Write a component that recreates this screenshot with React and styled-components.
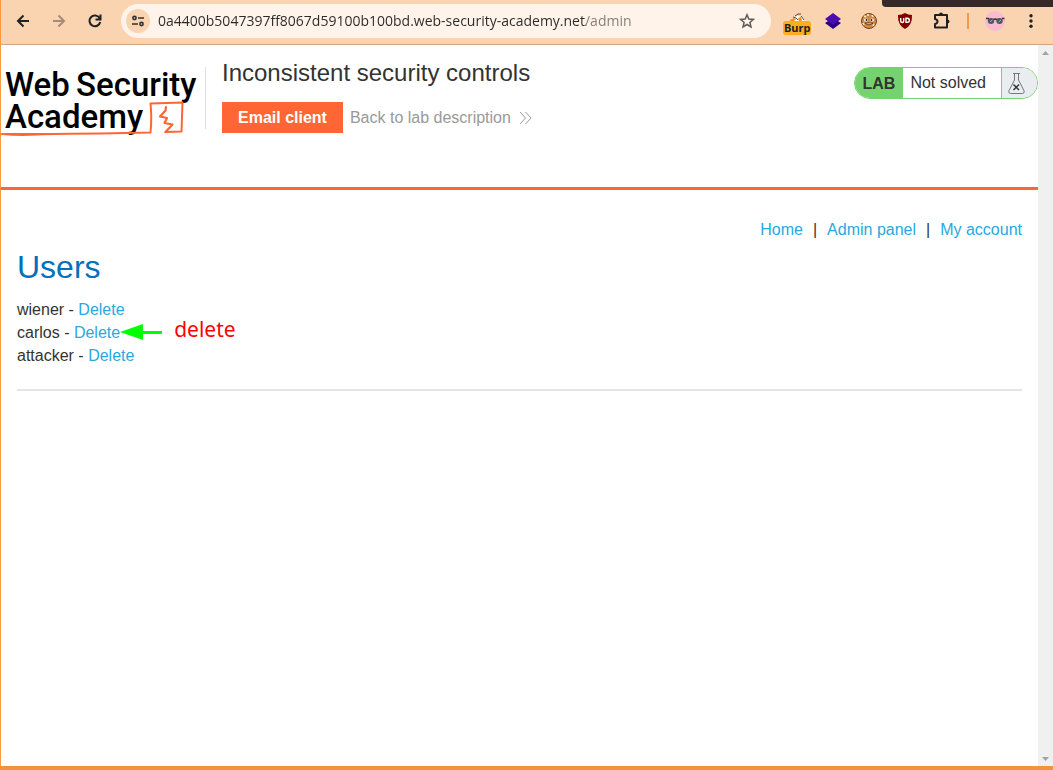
import React from "react";
import styled, { createGlobalStyle } from "styled-components";

const GlobalStyle = createGlobalStyle`
  *, *::before, *::after { box-sizing: border-box; }
  body { margin: 0; font-family: "Liberation Sans", Arial, sans-serif; font-size: 16px; color: #333332; background: #fff; }
  button { font: inherit; border: 0; padding: 0; background: none; color: inherit; cursor: pointer; }
  a { text-decoration: none; }
`;

const Window = styled.div`
  position: relative;
  display: flex;
  flex-direction: column;
  min-height: 100vh;
  border-left: 1px solid #f79a42;
  border-bottom: 4px solid #f39239;
`;

const TabStub = styled.div`
  position: absolute;
  top: 0;
  right: 0;
  width: 171px;
  height: 7px;
  background: #352a25;
  border-bottom-left-radius: 4px;
`;

const Toolbar = styled.header`
  display: flex;
  align-items: center;
  padding: 4px 4px 6px;
  background: #fad3b1;
  border-bottom: 1px solid #cfa684;
`;

const IconButton = styled.button`
  display: flex;
  align-items: center;
  justify-content: center;
  flex: none;
  width: 36px;
  height: 34px;
  color: ${(p) => (p.$muted ? "#a58c77" : "#202124")};
`;

const AddressBar = styled.div`
  display: flex;
  align-items: center;
  flex: 1;
  min-width: 0;
  height: 34px;
  margin: 0 8px;
  padding: 0 12px 0 5px;
  border-radius: 17px;
  background: #fff3ea;
`;

const RoundButton = styled.button`
  display: flex;
  align-items: center;
  justify-content: center;
  flex: none;
  width: 24px;
  height: 24px;
  border-radius: 12px;
  background: ${(p) => (p.$filled ? "#fad3b1" : "transparent")};
  color: #303134;
`;

const AddressInput = styled.input`
  flex: 1;
  min-width: 0;
  height: 24px;
  margin: 0 8px;
  padding: 0;
  border: 0;
  outline: 0;
  font: 14px/24px "Open Sans", "Noto Sans", sans-serif;
  color: #2b2a29;
  background: linear-gradient(to right, #2b2a29 428px, #827a74 428px);
  background-clip: text;
  -webkit-text-fill-color: transparent;
`;

const BurpIcon = styled.span`
  display: flex;
  flex-direction: column;
  align-items: center;
  padding-top: 5px;
`;

const BurpBadge = styled.span`
  width: 28px;
  height: 14px;
  padding-left: 1px;
  overflow: hidden;
  border-radius: 3px;
  background: #fcae1e;
  font: bold 11px/14px "Noto Sans", sans-serif;
  color: #202124;
  text-align: left;
  white-space: nowrap;
`;

const Separator = styled.span`
  flex: none;
  width: 2px;
  height: 16px;
  margin: 0 8px;
  background: #f39b4b;
`;

const Viewport = styled.div`
  display: flex;
  flex: 1;
`;

const Page = styled.div`
  flex: 1;
  min-width: 0;
`;

const ScrollTrack = styled.div`
  display: flex;
  flex-direction: column;
  align-items: center;
  justify-content: space-between;
  width: 15px;
  padding: 6px 0 5px;
  background: #f0f0f0;
`;

const LabHeader = styled.section`
  display: flex;
  align-items: flex-start;
  height: 145px;
  padding-top: 13px;
  border-bottom: 3px solid #ff6633;
`;

const LogoLink = styled.a`
  display: flex;
  margin-top: 9px;
  padding-right: 4px;
  height: 62px;
  border-right: 1px solid #e0e0e0;

  svg { flex: none; overflow: visible; }
`;

const LabInfo = styled.div`
  flex: 1;
  padding-left: 16px;
`;

const LabTitle = styled.h2`
  margin: 0 0 14px;
  font-size: 24px;
  line-height: 30px;
  font-weight: 400;
`;

const LabActions = styled.div`
  display: flex;
  align-items: center;
  gap: 7px;
`;

const EmailLink = styled.a`
  padding: 0 16px;
  background: #ff6633;
  color: #fff;
  font-weight: 700;
  line-height: 31px;
`;

const BackLink = styled.a`
  display: flex;
  align-items: center;
  gap: 8px;
  color: #999;
`;

const LabStatus = styled.div`
  display: flex;
  height: 32px;
  margin-top: 9px;
  overflow: hidden;
  border: 1px solid #75d36f;
  border-radius: 16px;
  line-height: 30px;
`;

const LabTag = styled.span`
  padding: 0 8px;
  background: #75d36f;
  font-weight: 700;
  line-height: 32px;
`;

const LabState = styled.span`
  padding: 0 15px 0 7px;
`;

const LabFlask = styled.span`
  display: flex;
  align-items: center;
  width: 36px;
  padding-left: 6px;
  border-left: 1px solid #75d36f;
  background: #e9edf0;
`;

const Content = styled.main`
  padding: 28px 16px;
`;

const Nav = styled.nav`
  display: flex;
  justify-content: flex-end;
  gap: 10px;
  line-height: 24px;
`;

const TextLink = styled.a`
  color: #29a8e0;
`;

const Heading = styled.h1`
  margin: 7px 0 13px;
  font-size: 32px;
  line-height: 36px;
  font-weight: 400;
  color: #0071bc;
`;

const UserList = styled.ul`
  margin: 0;
  padding: 0;
  list-style: none;
  line-height: 23px;
`;

const UserRow = styled.li`
  display: flex;
`;

const UserLine = styled.span`
  position: relative;
  white-space: pre;
`;

const Annotation = styled.span`
  position: absolute;
  left: 100%;
  top: -5px;
  display: flex;
  align-items: flex-start;
  gap: 12px;
  font: 21px/26px "Noto Sans", sans-serif;
  color: #f00;

  svg { margin-top: 8px; }
`;

const Rule = styled.hr`
  height: 2px;
  margin: 22px 0 0;
  border: 0;
  background: #e4e4e4;
`;

const stroke = { fill: "none", stroke: "currentColor", strokeWidth: 2 };

function Logo() {
  return (
    <svg width="200" height="72" viewBox="0 0 200 72" role="img" aria-label="Web Security Academy">
      <g fill="#000" fontFamily="Roboto, sans-serif" fontWeight="500" fontSize="33">
        <text x="4" y="29">Web</text>
        <text x="75" y="29">Security</text>
        <text x="4" y="61">Academy</text>
      </g>
      <g fill="none" stroke="#ff6633" strokeLinejoin="round" strokeLinecap="round">
        <path d="M1 67 Q18 68.500 36 67.500 T100 66.500 L149.500 65.500 Q151 50 149.500 36.500 L181.500 35.500 Q181 50 180.500 64.500 L164.500 65" strokeWidth="2" />
        <path d="M5 66.500 L60 66.500" strokeWidth="1" />
        <path d="M165 40 L164.500 43.500 L159 49.500 L166 51 L163.500 56 L171.500 57.500 L164.500 65" strokeWidth="2.200" />
      </g>
    </svg>
  );
}

function Arrow() {
  return (
    <svg width="42" height="16" viewBox="0 0 42 16" aria-hidden="true">
      <path d="M0 8 L23 0 V7 H42 V10 H23 V16 Z" fill="#0f0" />
    </svg>
  );
}

function Flask() {
  return (
    <svg width="17" height="21" viewBox="0 0 17 21" fill="none" stroke="#777" aria-hidden="true">
      <path d="M5 .500 H12 M6.500 1 V7 L.800 18 Q.500 20.500 2.500 20.500 H14.500 Q16.500 20.500 16.200 18 L10.500 7 V1" />
      <path d="M5.500 11.500 L11 17 M11 11.500 L5.500 17" stroke="#333" strokeWidth="1.500" />
    </svg>
  );
}

function BurpDish() {
  return (
    <svg width="17" height="9" viewBox="0 0 17 9" aria-hidden="true">
      <path d="M1 9 L5 5 L9 4 L13 5 L16 9 Z" fill="#fff" />
      <path d="M1 8 L5 6 L7 7 L5 9 H1 Z M9 6 L12 5 L13 9 H10 Z" fill="#f58a1f" />
      <path d="M6 4 L9 2 L12 2 M4 5 L7 6 L9 8 M12 4 L15 8" stroke="#4a4a4a" fill="none" />
    </svg>
  );
}

function Cookie() {
  return (
    <svg width="18" height="18" viewBox="0 0 18 18" aria-hidden="true">
      <circle cx="9" cy="9" r="7.500" fill="#d08a45" stroke="#704322" />
      <path d="M4 4 L6 5 M12 3 L13 5 M7 3 H9 M3 11 L4 13 M14 12 L13 14" stroke="#fff0b8" strokeWidth="1.500" />
      <ellipse cx="6" cy="8" rx="2" ry="1.500" fill="#fff" />
      <ellipse cx="12" cy="8" rx="2" ry="1.500" fill="#fff" />
      <circle cx="6.500" cy="8" r="1" fill="#2b1a10" />
      <circle cx="11.500" cy="8" r="1" fill="#2b1a10" />
      <path d="M5 11 Q9 14.500 13 11 Z" fill="#fff" stroke="#4d2814" strokeWidth=".800" />
    </svg>
  );
}

function Shield() {
  return (
    <svg width="16" height="16" viewBox="0 0 16 16" aria-hidden="true">
      <path d="M8 0 Q11 2 15 2 Q15.500 12 8 16 Q.500 12 1 2 Q5 2 8 0 Z" fill="#800000" />
      <path d="M3.700 5 V8 Q3.700 9.500 5.200 9.500 T6.700 8 V5 M9 5.200 H10.300 Q12.400 5.400 12.400 7.300 T10.300 9.400 H9 Z" fill="none" stroke="#fff" strokeWidth="1.400" />
    </svg>
  );
}

function Avatar() {
  return (
    <svg width="20" height="20" viewBox="0 0 20 20" aria-hidden="true">
      <circle cx="10" cy="10" r="10" fill="#f8bbd0" />
      <ellipse cx="6" cy="10" rx="3.200" ry="3" fill="#4c5759" />
      <ellipse cx="14.500" cy="10" rx="3.200" ry="3" fill="#4c5759" />
      <path d="M1 7.500 H4 M8.500 8.500 Q10.200 7.500 12 8.500 M17 7.500 H19.500" stroke="#392e32" strokeWidth="1.500" fill="none" />
      <path d="M5 11 L7.500 9 M13.500 11 L16 9" stroke="#a3b8b8" />
    </svg>
  );
}

function BrowserToolbar() {
  return (
    <Toolbar>
      <IconButton aria-label="Back">
        <svg width="14" height="14" viewBox="0 0 14 14" {...stroke}><path d="M13 7 H2 M7.500 1.500 L2 7 L7.500 12.500" /></svg>
      </IconButton>
      <IconButton aria-label="Forward" $muted>
        <svg width="14" height="14" viewBox="0 0 14 14" {...stroke}><path d="M1 7 H12 M6.500 1.500 L12 7 L6.500 12.500" /></svg>
      </IconButton>
      <IconButton aria-label="Reload">
        <svg width="14" height="14" viewBox="0 0 14 14" {...stroke}><path d="M12.200 8 A5.400 5.400 0 1 1 11.500 4 L12 5 M12.500 0.500 V5.500 H7.500" /></svg>
      </IconButton>
      <AddressBar>
        <RoundButton $filled aria-label="View site information">
          <svg width="12" height="12" viewBox="0 0 12 12" fill="none" stroke="currentColor" strokeWidth="1.600">
            <circle cx="2.500" cy="3" r="1.600" /><path d="M6 3 H12 M0 9 H6" /><circle cx="9.500" cy="9" r="1.600" />
          </svg>
        </RoundButton>
        <AddressInput
          aria-label="Address and search bar"
          defaultValue="0a4400b5047397ff8067d59100b100bd.web-security-academy.net/admin"
        />
        <RoundButton aria-label="Bookmark this tab">
          <svg width="16" height="16" viewBox="0 0 16 16" fill="none" stroke="#5f5b58" strokeWidth="1.500">
            <path d="M8 1.800 L9.800 6 L14.400 6.400 L10.900 9.400 L12 14 L8 11.500 L4 14 L5.100 9.400 L1.600 6.400 L6.200 6 Z" />
          </svg>
        </RoundButton>
      </AddressBar>
      <IconButton aria-label="Burp extension">
        <BurpIcon><BurpDish /><BurpBadge>Burp</BurpBadge></BurpIcon>
      </IconButton>
      <IconButton aria-label="Layers extension">
        <svg width="16" height="16" viewBox="0 0 16 16">
          <path d="M0 10 L8 5 L16 10 L8 16 Z" fill="#2b0087" /><path d="M0 6 L8 0 L16 6 L8 12 Z" fill="#4a0bb0" />
        </svg>
      </IconButton>
      <IconButton aria-label="Cookie extension"><Cookie /></IconButton>
      <IconButton aria-label="Ad blocker extension"><Shield /></IconButton>
      <IconButton aria-label="Extensions">
        <svg width="18" height="18" viewBox="0 0 18 18" {...stroke}>
          <path d="M3 3 H15 V15.500 H3 V12 Q5.500 11.500 5.500 9.500 T3 7 Z" strokeLinejoin="round" />
          <path d="M7 2.500 A2 2 0 0 1 11 2.500 Z M15.500 7.500 A2 2 0 0 1 15.500 11.500 Z" fill="currentColor" stroke="none" />
        </svg>
      </IconButton>
      <Separator />
      <IconButton aria-label="Profile"><Avatar /></IconButton>
      <IconButton aria-label="Browser menu">
        <svg width="4" height="14" viewBox="0 0 4 14" fill="currentColor">
          <circle cx="2" cy="1.800" r="1.700" /><circle cx="2" cy="7" r="1.700" /><circle cx="2" cy="12.200" r="1.700" />
        </svg>
      </IconButton>
    </Toolbar>
  );
}

const users = [{ name: "wiener" }, { name: "carlos", note: "delete" }, { name: "attacker" }];

export default function App() {
  return (
    <Window>
      <GlobalStyle />
      <BrowserToolbar />
      <TabStub />
      <Viewport>
        <Page>
          <LabHeader>
            <LogoLink href="#academy"><Logo /></LogoLink>
            <LabInfo>
              <LabTitle>Inconsistent security controls</LabTitle>
              <LabActions>
                <EmailLink href="#email">Email client</EmailLink>
                <BackLink href="#lab">
                  Back to lab description
                  <svg width="13" height="14" viewBox="0 0 13 14" fill="none" stroke="currentColor">
                    <path d="M1 1 L6.500 7 L1 13 M6.500 1 L12 7 L6.500 13" />
                  </svg>
                </BackLink>
              </LabActions>
            </LabInfo>
            <LabStatus>
              <LabTag>LAB</LabTag>
              <LabState>Not solved</LabState>
              <LabFlask><Flask /></LabFlask>
            </LabStatus>
          </LabHeader>
          <Content>
            <Nav>
              <TextLink href="#home">Home</TextLink>
              <span>|</span>
              <TextLink href="#admin">Admin panel</TextLink>
              <span>|</span>
              <TextLink href="#account">My account</TextLink>
            </Nav>
            <Heading>Users</Heading>
            <UserList>
              {users.map((user) => (
                <UserRow key={user.name}>
                  <UserLine>
                    {user.name} - <TextLink href={`#delete-${user.name}`}>Delete</TextLink>
                    {user.note && <Annotation><Arrow />{user.note}</Annotation>}
                  </UserLine>
                </UserRow>
              ))}
            </UserList>
            <Rule />
          </Content>
        </Page>
        <ScrollTrack>
          <svg width="7" height="4" viewBox="0 0 7 4"><path d="M0 4 L3.500 0 L7 4 Z" fill="#a3a3a3" /></svg>
          <svg width="7" height="4" viewBox="0 0 7 4"><path d="M0 0 L3.500 4 L7 0 Z" fill="#a3a3a3" /></svg>
        </ScrollTrack>
      </Viewport>
    </Window>
  );
}
